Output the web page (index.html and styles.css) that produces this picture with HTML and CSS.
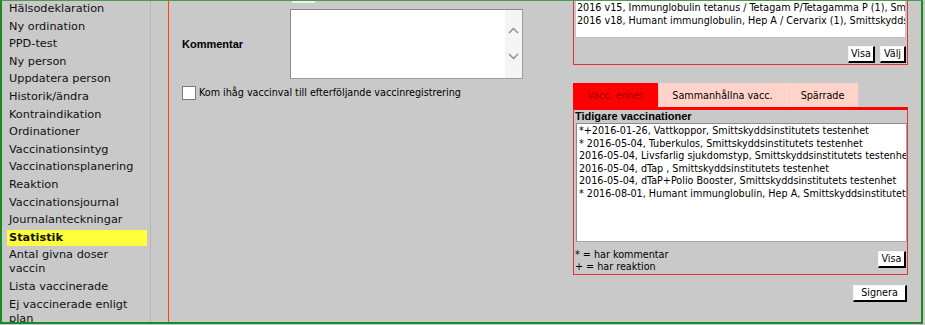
FILE: index.html
```html
<!DOCTYPE html>
<html lang="sv">
<head>
<meta charset="utf-8">
<title>Vaccination</title>
<link rel="stylesheet" href="styles.css">
</head>
<body>
<div class="frame">
  <nav class="sidebar">
    <div class="nav-item">Hälsodeklaration</div>
    <div class="nav-item">Ny ordination</div>
    <div class="nav-item">PPD-test</div>
    <div class="nav-item">Ny person</div>
    <div class="nav-item">Uppdatera person</div>
    <div class="nav-item">Historik/ändra</div>
    <div class="nav-item">Kontraindikation</div>
    <div class="nav-item">Ordinationer</div>
    <div class="nav-item">Vaccinationsintyg</div>
    <div class="nav-item">Vaccinationsplanering</div>
    <div class="nav-item">Reaktion</div>
    <div class="nav-item">Vaccinationsjournal</div>
    <div class="nav-item">Journalanteckningar</div>
    <div class="nav-item active">Statistik</div>
    <div class="nav-item">Antal givna doser vaccin</div>
    <div class="nav-item">Lista vaccinerade</div>
    <div class="nav-item">Ej vaccinerade enligt plan</div>
  </nav>
  <main class="main">
    <section class="mid">
      <div class="stub"></div>
      <div class="comment-row">
        <div class="comment-label">Kommentar</div>
        <div class="textarea">
          <div class="scroll">
            <svg class="chev" width="11" height="7" viewBox="0 0 11 7"><path d="M1 6 L5.5 1.5 L10 6" fill="none" stroke="#8a8a8a" stroke-width="1.4"/></svg>
            <svg class="chev" width="11" height="7" viewBox="0 0 11 7"><path d="M1 1 L5.5 5.5 L10 1" fill="none" stroke="#8a8a8a" stroke-width="1.4"/></svg>
          </div>
        </div>
      </div>
      <div class="check-row">
        <span class="checkbox"></span>
        <span class="check-label">Kom ihåg vaccinval till efterföljande vaccinregistrering</span>
      </div>
    </section>
    <section class="right">
      <div class="topbox">
        <div class="list list-top">
          <div class="line">2016 v15, Immunglobulin tetanus / Tetagam P/Tetagamma P (1), Smittskyddsinstitutets testenhet</div>
          <div class="line">2016 v18, Humant immunglobulin, Hep A / Cervarix (1), Smittskyddsinstitutets testenhet</div>
        </div>
        <div class="btn-row">
          <span class="btn btn-visa">Visa</span>
          <span class="btn btn-valj">Välj</span>
        </div>
      </div>
      <div class="tabs">
        <div class="tab tab-active">Vacc. enhet</div>
        <div class="tab tab-2">Sammanhållna vacc.</div>
        <div class="tab tab-3">Spärrade</div>
      </div>
      <div class="panel">
        <div class="panel-title">Tidigare vaccinationer</div>
        <div class="list list-main">
          <div class="line">*+2016-01-26, Vattkoppor, Smittskyddsinstitutets testenhet</div>
          <div class="line">* 2016-05-04, Tuberkulos, Smittskyddsinstitutets testenhet</div>
          <div class="line">2016-05-04, Livsfarlig sjukdomstyp, Smittskyddsinstitutets testenhet</div>
          <div class="line">2016-05-04, dTap , Smittskyddsinstitutets testenhet</div>
          <div class="line">2016-05-04, dTaP+Polio Booster, Smittskyddsinstitutets testenhet</div>
          <div class="line">* 2016-08-01, Humant immunglobulin, Hep A, Smittskyddsinstitutets testenhet</div>
        </div>
        <div class="panel-foot">
          <div class="legend">
            <div>* = har kommentar</div>
            <div>+ = har reaktion</div>
          </div>
          <span class="btn btn-foot">Visa</span>
        </div>
      </div>
      <div class="sign-row">
        <span class="btn btn-sign">Signera</span>
      </div>
    </section>
  </main>
</div>
</body>
</html>
```
FILE: styles.css
```css
* { box-sizing: border-box; }
html, body { margin: 0; padding: 0; background: #c9c9c9; }
body {
  font-family: "DejaVu Sans Condensed", "Liberation Sans", sans-serif;
  font-size: 10.7px;
  color: #000;
}
.frame {
  display: flex;
  width: 923px;
  height: 324px;
  border-left: 2px solid #1c8a22;
  border-right: 2px solid #1c8a22;
  border-bottom: 2px solid #1c8a22;
  border-top: 1px solid #4a9a50;
  background: #c9c9c9;
  overflow: hidden;
}
.sidebar {
  width: 149px;
  flex: none;
  padding-left: 5px;
  border-right: 1px solid #b6b6b6;
  font-family: "DejaVu Sans", Verdana, sans-serif;
  font-size: 11.3px;
}
.nav-item {
  width: 140px;
  padding: 1px 6px 1px 2px;
  line-height: 14px;
  margin-bottom: 1.6px;
  color: #111;
}
.nav-item.active {
  background: #ffff3c;
  font-weight: bold;
}
.main {
  flex: 1;
  display: flex;
  margin-left: 17px;
  border-left: 1px solid #e0522c;
  box-shadow: inset 1px 0 0 #f3b9a3;
}
.mid {
  width: 404px;
  flex: none;
  padding-left: 13px;
}
.stub {
  margin-left: 110px;
  width: 23px;
  height: 2px;
  background: #eef0ee;
}
.comment-row {
  display: flex;
  align-items: center;
  margin-top: 6px;
}
.comment-label {
  width: 108px;
  font-weight: bold;
  font-family: "Liberation Sans", sans-serif;
  font-size: 11px;
}
.textarea {
  width: 233px;
  height: 70px;
  background: #fff;
  border: 1px solid #9c9c9c;
  border-top-color: #888;
  border-left-color: #888;
  display: flex;
  justify-content: flex-end;
}
.scroll {
  width: 17px;
  background: #f5f5f5;
  display: flex;
  flex-direction: column;
  justify-content: space-between;
  align-items: center;
  padding: 17px 0 18px;
}
.chev { display: block; }
.check-row {
  display: flex;
  align-items: center;
  margin-top: 7px;
}
.checkbox {
  width: 14px;
  height: 14px;
  background: #fff;
  border: 1px solid #7a7a7a;
}
.check-label {
  margin-left: 3px;
  line-height: 14px;
}
.right {
  width: 335px;
  flex: none;
}
.topbox {
  border: 1px solid #e2333a;
  border-top: none;
  padding: 0 1px 1px 2px;
}
.list {
  background: #fff;
  overflow: hidden;
  white-space: nowrap;
}
.list-top {
  height: 37px;
  border-right: 1px solid #c4c4c4;
  border-bottom: 1px solid #c4c4c4;
  padding-left: 1px;
  line-height: 13px;
}
.btn-row {
  display: flex;
  justify-content: flex-end;
  gap: 5px;
  padding-top: 8px;
}
.btn {
  display: inline-block;
  height: 17px;
  line-height: 14px;
  text-align: center;
  background: #fff;
  border-top: 1px solid #f4f4f4;
  border-left: 1px solid #f4f4f4;
  border-right: 2px solid #000;
  border-bottom: 2px solid #000;
}
.btn-visa { width: 27px; }
.btn-valj { width: 26px; }
.tabs {
  display: flex;
  margin-top: 18px;
  height: 24px;
}
.tab {
  display: flex;
  align-items: center;
  justify-content: center;
  background: #ffd3c9;
  border-right: 1px solid #f6e2dc;
}
.tab-active {
  width: 86px;
  background: #ff0000;
  color: #9e0000;
  border-right: 1px solid #f4c8bc;
}
.tab-2 { width: 128px; }
.tab-3 { width: 71px; border-right: none; }
.panel {
  border: 1px solid #e2333a;
  border-top: 3px solid #ff0000;
  padding: 0 1px;
}
.panel-title {
  font-weight: bold;
  font-family: "Liberation Sans", sans-serif;
  font-size: 11px;
  line-height: 13px;
}
.list-main {
  margin-left: 1px;
  width: 331px;
  height: 119px;
  border: 1px solid #a8a8a8;
  border-top-color: #8c8c8c;
  border-left-color: #8c8c8c;
  padding: 1px 0 0 2px;
  line-height: 12.5px;
}
.panel-foot {
  display: flex;
  justify-content: space-between;
  align-items: flex-start;
  height: 32px;
}
.legend {
  padding-top: 7px;
  line-height: 12px;
}
.btn-foot { margin-top: 9px; width: 28px; }
.sign-row {
  display: flex;
  justify-content: flex-end;
  padding: 10px 1px 0 0;
}
.btn-sign {
  width: 54px;
}
```
